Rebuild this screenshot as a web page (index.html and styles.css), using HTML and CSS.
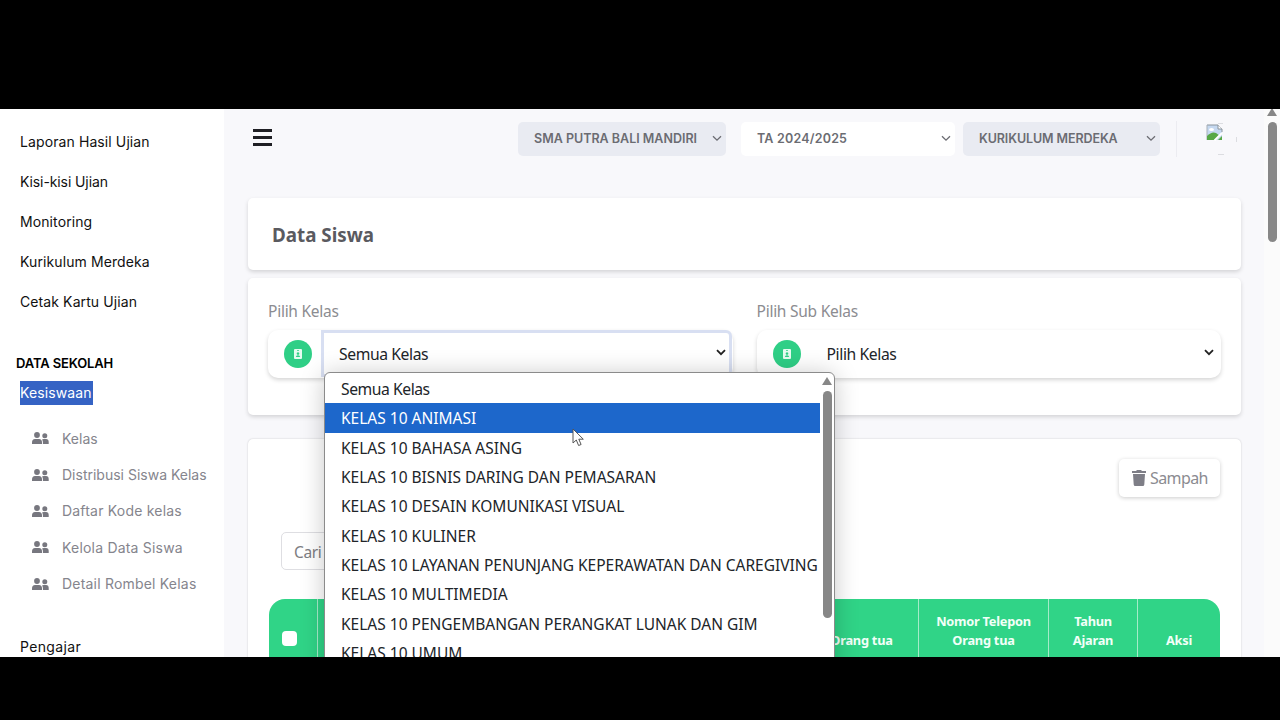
FILE: index.html
```html
<!DOCTYPE html>
<html lang="id">
<head>
    <meta charset="UTF-8">
    <meta name="viewport" content="width=device-width, initial-scale=1.0">
    <title>Data Siswa</title>
    <link rel="stylesheet" href="styles.css">
</head>
<body>
    <svg class="sprite">
        <symbol id="users" viewBox="0 0 17 12">
            <circle cx="5" cy="3" r="2.9"/>
            <path d="M0 12v-1.500Q0 7 3 7h4q3 0 3 3.500V12z"/>
            <circle cx="12.8" cy="3.700" r="2.500"/>
            <path d="M10.900 12v-2q0-1.500-.9-2.600.8-.4 1.700-.4h2.300q2.700 0 2.700 3V12z"/>
        </symbol>
        <symbol id="chevron" viewBox="0 0 10 7">
            <path d="M1 1.200l4 4 4-4" fill="none" stroke="currentColor"/>
        </symbol>
        <symbol id="badge" viewBox="0 0 8 10">
            <path fill-rule="evenodd" d="M1 0h6q1 0 1 1v8q0 1-1 1H1q-1 0-1-1V1q0-1 1-1zM3 1v.8h2V1zM4 3.200a1.300 1.300 0 1 0 .01 0zM1.800 8h4.400Q6 6.200 4 6.200T1.800 8z"/>
        </symbol>
    </svg>

    <div class="page">
        <div class="sidebar">
            <ul class="menu">
                <li>Laporan Hasil Ujian</li>
                <li class="tight">Kisi-kisi Ujian</li>
                <li>Monitoring</li>
                <li>Kurikulum Merdeka</li>
                <li>Cetak Kartu Ujian</li>
            </ul>
            <h4 class="menu-title">DATA SEKOLAH</h4>
            <div class="menu-active"><span>Kesiswaan</span></div>
            <ul class="submenu">
                <li><svg><use href="#users"/></svg><span>Kelas</span></li>
                <li><svg><use href="#users"/></svg><span>Distribusi Siswa Kelas</span></li>
                <li class="wide"><svg><use href="#users"/></svg><span>Daftar Kode kelas</span></li>
                <li class="wide"><svg><use href="#users"/></svg><span>Kelola Data Siswa</span></li>
                <li class="wide"><svg><use href="#users"/></svg><span>Detail Rombel Kelas</span></li>
            </ul>
            <div class="menu-next">Pengajar</div>
        </div>

        <div class="main">
            <div class="topbar">
                <div class="burger"><i></i><i></i><i></i></div>
                <div class="pick pick-school"><span>SMA PUTRA BALI MANDIRI</span><svg class="chev"><use href="#chevron"/></svg></div>
                <div class="pick pick-year"><span>TA 2024/2025</span><svg class="chev"><use href="#chevron"/></svg></div>
                <div class="pick pick-curriculum"><span>KURIKULUM MERDEKA</span><svg class="chev"><use href="#chevron"/></svg></div>
                <div class="profile">
                    <svg width="34" height="34" viewBox="0 0 34 34">
                        <path d="M2 3h11l4 4v11H2z" fill="#c5d8f0"/>
                        <path d="M2 3h11l4 4v3" fill="none" stroke="#8b949c"/>
                        <path d="M2 3v15" stroke="#a9b1b8"/>
                        <path d="M13 3v4h4" fill="#fff" stroke="#8b949c"/>
                        <ellipse cx="6.500" cy="7.500" rx="2.500" ry="1.500" fill="#fff"/>
                        <path d="M2 18v-4q5-5 9-3l4 3-4 4z" fill="#57a846"/>
                        <path d="M17 11L9.500 18.500" stroke="#fff" stroke-width="2"/>
                        <path d="M17 14v4h-4z" fill="#57a846"/>
                        <path d="M13 1.500h5M13 32.500h6M31.500 15v5" stroke="#dcdde1"/>
                    </svg>
                </div>
            </div>

            <div class="card card-title"><h1>Data Siswa</h1></div>

            <div class="card card-filter">
                <div class="field">
                    <label>Pilih Kelas</label>
                    <div class="select-group">
                        <span class="dot"><svg><use href="#badge"/></svg></span>
                        <div class="select focused"><span>Semua Kelas</span><svg class="chev"><use href="#chevron"/></svg></div>
                    </div>
                    <div class="dropdown">
                        <ul>
                            <li class="tight">Semua Kelas</li>
                            <li class="hover">KELAS 10 ANIMASI</li>
                            <li>KELAS 10 BAHASA ASING</li>
                            <li>KELAS 10 BISNIS DARING DAN PEMASARAN</li>
                            <li>KELAS 10 DESAIN KOMUNIKASI VISUAL</li>
                            <li>KELAS 10 KULINER</li>
                            <li>KELAS 10 LAYANAN PENUNJANG KEPERAWATAN DAN CAREGIVING</li>
                            <li>KELAS 10 MULTIMEDIA</li>
                            <li>KELAS 10 PENGEMBANGAN PERANGKAT LUNAK DAN GIM</li>
                            <li>KELAS 10 UMUM</li>
                        </ul>
                        <div class="dropdown-bar"><i class="arrow"></i><i class="thumb"></i></div>
                    </div>
                </div>
                <div class="field">
                    <label>Pilih Sub Kelas</label>
                    <div class="select-group">
                        <span class="dot"><svg><use href="#badge"/></svg></span>
                        <div class="select"><span>Pilih Kelas</span><svg class="chev"><use href="#chevron"/></svg></div>
                    </div>
                </div>
            </div>

            <div class="card card-table">
                <div class="actions">
                    <div class="btn-trash">
                        <svg width="14" height="16" viewBox="0 0 14 16"><path d="M0 1h4l1-1h4l1 1h4v2H0zM1 4h12l-.7 10.500q-.1 1.500-1.500 1.500H3.200q-1.400 0-1.500-1.500z"/></svg>
                        <span>Sampah</span>
                    </div>
                </div>
                <div class="search">Cari</div>
                <div class="thead">
                    <div class="th"><i class="check"></i></div>
                    <div class="th"></div>
                    <div class="th">Orang tua</div>
                    <div class="th">Nomor Telepon<br>Orang tua</div>
                    <div class="th">Tahun<br>Ajaran</div>
                    <div class="th">Aksi</div>
                </div>
            </div>
        </div>

        <div class="scrollbar"><i class="arrow"></i><i class="thumb"></i></div>

        <svg class="cursor" width="13" height="19" viewBox="0 0 13 19">
            <path d="M1 1v14l3.300-3 2.300 5.500 2.500-1-2.300-5.300h4.500z" fill="#fff" stroke="#555" stroke-width="1"/>
        </svg>
    </div>
</body>
</html>
```
FILE: styles.css
```css
* {
    box-sizing: border-box;
}
body {
    margin: 0;
    height: 720px;
    padding: 109px 0 63px;
    background: #000;
    overflow: hidden;
    font-family: "Noto Sans", "Open Sans", sans-serif;
    font-size: 16px;
    color: #212529;
}
ul {
    list-style: none;
    margin: 0;
    padding: 0;
}
.sprite {
    display: none;
}
.page {
    position: relative;
    display: flex;
    height: 548px;
    overflow: hidden;
    background: #f8f8fb;
}

/* sidebar */
.sidebar {
    width: 224px;
    flex: none;
    padding-top: 13px;
    background: #fff;
    font-family: Inter, sans-serif;
    font-size: 14px;
    color: #111;
    white-space: nowrap;
}
.menu li {
    height: 40px;
    line-height: 40px;
    padding-left: 20px;
    letter-spacing: 0.1px;
}
.menu li.tight {
    letter-spacing: -0.1px;
}
.menu-title {
    margin: 31px 0 0 16px;
    font-size: 13px;
    font-weight: 600;
    line-height: 20px;
    letter-spacing: -0.15px;
    color: #000;
}
.menu-active {
    margin: 8px 0 0 20px;
    line-height: 24px;
    letter-spacing: 0.1px;
    color: #fff;
}
.menu-active span {
    display: inline-block;
    width: 73px;
    background: #3563c4;
}
.submenu {
    margin-top: 15px;
    color: #85858d;
}
.submenu li {
    display: flex;
    align-items: center;
    height: 36.4px;
    padding-left: 32px;
    gap: 13px;
}
.submenu li.wide {
    letter-spacing: 0.2px;
}
.submenu svg {
    width: 17px;
    height: 12px;
    fill: #77777f;
}
.menu-next {
    margin: 35px 0 0 20px;
    line-height: 20px;
    letter-spacing: 0.35px;
}

/* content */
.main {
    flex: 1;
    padding: 0 23px 0 24px;
}
.topbar {
    display: flex;
    align-items: center;
    height: 60px;
    margin-bottom: 29px;
}
.burger {
    display: flex;
    flex-direction: column;
    gap: 4px;
    width: 19px;
    margin: 0 auto 3px 5px;
}
.burger i {
    height: 3px;
    background: #1f1f24;
}
.pick {
    display: flex;
    align-items: center;
    justify-content: space-between;
    height: 34px;
    padding: 0 4px 1px 16px;
    border-radius: 5px;
    background: #e9ebf2;
    font-family: Inter, sans-serif;
    font-size: 12.5px;
    font-weight: 600;
    color: #6b6c72;
    white-space: nowrap;
}
.pick-school {
    width: 208px;
}
.pick-year {
    width: 214px;
    margin-left: 15px;
    background: #fff;
    letter-spacing: 0.2px;
}
.pick-curriculum {
    width: 197px;
    margin-left: 8px;
    letter-spacing: -0.1px;
}
.chev {
    width: 10px;
    height: 7px;
    stroke-width: 1.3;
}
.profile {
    height: 36px;
    width: 65px;
    margin-left: 16px;
    padding: 1px 0 0 28px;
    border-left: 1px solid #ececf1;
}
.card {
    background: #fff;
    border-radius: 5px;
    box-shadow: 0 2px 4px rgba(0, 0, 0, 0.15);
}
.card-title {
    height: 72px;
    padding-left: 24px;
}
.card-title h1 {
    margin: 0;
    font-size: 18.8px;
    font-weight: 700;
    line-height: 74px;
    color: #5a5a5f;
}
.card-filter {
    display: flex;
    gap: 24px;
    height: 137px;
    margin-top: 8px;
    padding: 21px 20px 0;
}
.field {
    position: relative;
    flex: 1;
}
.field label {
    display: block;
    height: 31px;
    font-size: 15.5px;
    line-height: 24px;
    letter-spacing: -0.25px;
    color: #8c8c91;
}
.select-group {
    display: flex;
    align-items: center;
    height: 48px;
    padding-left: 16px;
    border-radius: 10px;
    box-shadow: 0 2px 4px rgba(0, 0, 0, 0.17);
}
.dot {
    display: flex;
    align-items: center;
    justify-content: center;
    width: 28px;
    height: 28px;
    border-radius: 50%;
    background: #2fcf86;
}
.dot svg {
    width: 8px;
    height: 10px;
    fill: #e6fbf0;
}
.select {
    flex: 1;
    display: flex;
    align-items: center;
    justify-content: space-between;
    height: 44px;
    margin-left: 9px;
    padding: 0 7px 1px 17px;
    font-size: 15.7px;
    letter-spacing: -0.4px;
}
.select.focused {
    align-self: flex-start;
    height: 47px;
    margin-right: 1px;
    padding: 0 3px 0 15px;
    border: 3px solid #d8dff2;
    border-radius: 0 6px 6px 0;
}
.select .chev {
    margin-bottom: 3px;
    stroke-width: 1.8;
    color: #222;
}

/* open option list */
.dropdown {
    position: absolute;
    z-index: 2;
    left: 56px;
    top: 73px;
    display: flex;
    width: 511px;
    height: 320px;
    border: 1px solid #8b8b8b;
    border-radius: 6px 6px 0 0;
    background: #fff;
    box-shadow: 0 2px 24px rgba(0, 0, 0, 0.22);
    overflow: hidden;
}
.dropdown ul {
    width: 495px;
    flex: none;
    padding-top: 1px;
}
.dropdown li {
    height: 29.35px;
    padding-left: 16px;
    line-height: 31px;
    font-size: 15.5px;
    white-space: nowrap;
}
.dropdown li.tight {
    font-size: 15.7px;
    letter-spacing: -0.45px;
}
.dropdown li.hover {
    background: #1d67cb;
    color: #fff;
}
.dropdown-bar {
    display: flex;
    flex-direction: column;
    align-items: center;
    width: 14px;
    padding-top: 4px;
}
.arrow {
    border: 5px solid transparent;
    border-top: 0;
    border-bottom: 8px solid #878787;
}
.thumb {
    width: 9px;
    border-radius: 5px;
    background: #878787;
}
.dropdown .thumb {
    height: 227px;
    margin-top: 6px;
}

/* table */
.card-table {
    height: 300px;
    margin-top: 24px;
    padding: 20px 21px 0;
    box-shadow: 0 0 2px rgba(0, 0, 0, 0.2);
}
.actions {
    display: flex;
    justify-content: flex-end;
}
.btn-trash {
    display: flex;
    align-items: center;
    gap: 4px;
    width: 101px;
    height: 38px;
    padding-left: 13px;
    border-radius: 5px;
    box-shadow: 0 1px 4px rgba(0, 0, 0, 0.2);
    letter-spacing: -0.6px;
    color: #8b8b91;
}
.btn-trash svg {
    fill: #7e7e87;
}
.search {
    width: 230px;
    height: 38px;
    margin: 35px 0 0 12px;
    padding-left: 12px;
    border: 1px solid #dedee2;
    border-radius: 5px;
    line-height: 39px;
    letter-spacing: -0.4px;
    color: #7d7d82;
    font-size: 15.5px;
}
.thead {
    display: grid;
    grid-template-columns: 49px 1fr 114px 130px 89px 82px;
    height: 70px;
    margin-top: 29px;
    border-radius: 16px 16px 0 0;
    background: #30d487;
    color: #f2fff8;
    font-size: 12.8px;
    font-weight: 700;
    line-height: 19px;
    letter-spacing: -0.25px;
    text-align: center;
}
.th {
    display: flex;
    flex-direction: column;
    justify-content: flex-end;
    padding-bottom: 19px;
    border-right: 1px solid #a5ebc9;
}
.th:last-child {
    border-right: 0;
}
.check {
    width: 15px;
    height: 15px;
    margin: 0 0 4px 13px;
    border-radius: 4px;
    background: #fff;
}

/* page scrollbar */
.scrollbar {
    display: flex;
    flex-direction: column;
    align-items: center;
    width: 16px;
    background: #fbfbfb;
}
.scrollbar .arrow {
    margin-top: -1px;
}
.scrollbar .thumb {
    height: 120px;
    margin-top: 6px;
}
.cursor {
    position: absolute;
    z-index: 3;
    left: 572px;
    top: 319px;
}
```
